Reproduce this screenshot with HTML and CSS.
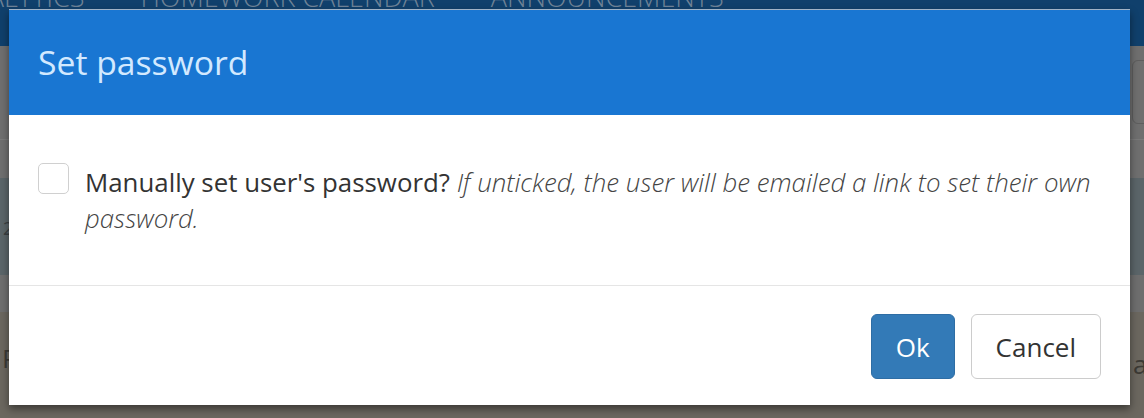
FILE: index.html
```html
<!DOCTYPE html>
<html>
<head>
<meta charset="utf-8">
<link rel="stylesheet" href="styles.css">
</head>
<body>
<div class="page">
  <nav class="nav">
    <span class="nav-item first">ANALYTICS</span>
    <span class="nav-item">HOMEWORK CALENDAR</span>
    <span class="nav-item">ANNOUNCEMENTS</span>
  </nav>
  <div class="band band-top"><span class="ghost-box"></span></div>
  <div class="band band-gray"></div>
  <div class="band band-blue"><span class="ghost-mark">2</span></div>
  <div class="band band-gray2"></div>
  <div class="band band-tan"><span class="ghost-l">P</span><span class="ghost-r">ar</span></div>
</div>

<div class="overlay">
  <div class="modal">
    <div class="modal-header">
      <h4 class="modal-title">Set password</h4>
    </div>
    <div class="modal-body">
      <label class="check-row">
        <span class="checkbox"></span>
        <span class="check-text">Manually set user's password? <em class="hint">If unticked, the user will be emailed a link to set their own password.</em></span>
      </label>
    </div>
    <div class="modal-footer">
      <button class="btn btn-primary">Ok</button>
      <button class="btn btn-default">Cancel</button>
    </div>
  </div>
</div>
</body>
</html>
```

FILE: styles.css
```css
* { box-sizing: border-box; }
html, body { margin: 0; padding: 0; }
body {
  width: 1144px;
  height: 418px;
  overflow: hidden;
  font-family: "Open Sans", "Liberation Sans", sans-serif;
  background: #6e6e6e;
  position: relative;
}

.page { display: flex; flex-direction: column; height: 418px; }

.nav {
  height: 46px;
  background: #10406c;
  display: flex;
  gap: 56px;
  overflow: hidden;
}
.nav-item {
  font-size: 27px;
  font-weight: 300;
  line-height: 27px;
  color: #6f8397;
  margin-top: -17px;
  white-space: nowrap;
}
.nav-item.first { margin-left: -48px; }

.band { position: relative; flex: none; }
.band-top { height: 94px; background: #6f6f6f; border-bottom: 1px solid #7a7a7a; }
.band-gray { height: 38px; background: #6f6f6f; }
.band-blue { height: 97px; background: #5b6569; }
.band-gray2 { height: 37px; background: #6e6e6e; }
.band-tan { flex: 1; background: #6b675f; }

.ghost-box {
  position: absolute;
  left: 1132px;
  top: 14px;
  width: 60px;
  height: 64px;
  border: 1px solid #5e5e5e;
  border-radius: 6px;
}
.ghost-mark {
  position: absolute;
  left: 3px;
  top: 38px;
  font-size: 18px;
  color: #3a3f42;
}
.ghost-l {
  position: absolute;
  left: 2px;
  top: 28px;
  font-size: 26px;
  color: #3c3a35;
}
.ghost-r {
  position: absolute;
  left: 1133px;
  top: 34px;
  font-size: 26px;
  color: #3c3a35;
}

.overlay {
  position: absolute;
  inset: 0;
  padding: 9px 0 0 9px;
}

.modal {
  width: 1121px;
  background: #fff;
  border-top: 1px solid #9fb2c6;
  box-shadow: 0 4px 8px rgba(0, 0, 0, 0.45);
}

.modal-header {
  height: 105px;
  background: #1976d2;
  display: flex;
  align-items: center;
  padding: 0 29px;
}
.modal-title {
  margin: 0;
  font-size: 33.7px;
  font-weight: 400;
  color: #d2e9ff;
  line-height: 1.3;
}

.modal-body {
  padding: 49px 29px 49px 29px;
}
.check-row {
  display: flex;
  align-items: flex-start;
  gap: 16px;
}
.checkbox {
  flex: none;
  width: 31px;
  height: 31px;
  margin-top: -1px;
  border: 1.5px solid #d0d0d0;
  border-radius: 5px;
  background: #fff;
}
.check-text {
  font-size: 25.85px;
  line-height: 36px;
  color: #333;
}
.hint {
  font-style: italic;
  font-weight: 300;
  color: #444;
}

.modal-footer {
  border-top: 1px solid #e5e5e5;
  padding: 28px 29px 26px;
  display: flex;
  justify-content: flex-end;
  gap: 16px;
}
.btn {
  height: 65px;
  padding: 0 24px;
  font-family: "Open Sans", "Liberation Sans", sans-serif;
  font-size: 26px;
  border-radius: 6px;
  border: 1px solid transparent;
  cursor: pointer;
}
.btn-primary {
  background: #337ab7;
  border-color: #2e6da4;
  color: #fff;
}
.btn-default {
  background: #fff;
  border-color: #ccc;
  color: #333;
}
```
